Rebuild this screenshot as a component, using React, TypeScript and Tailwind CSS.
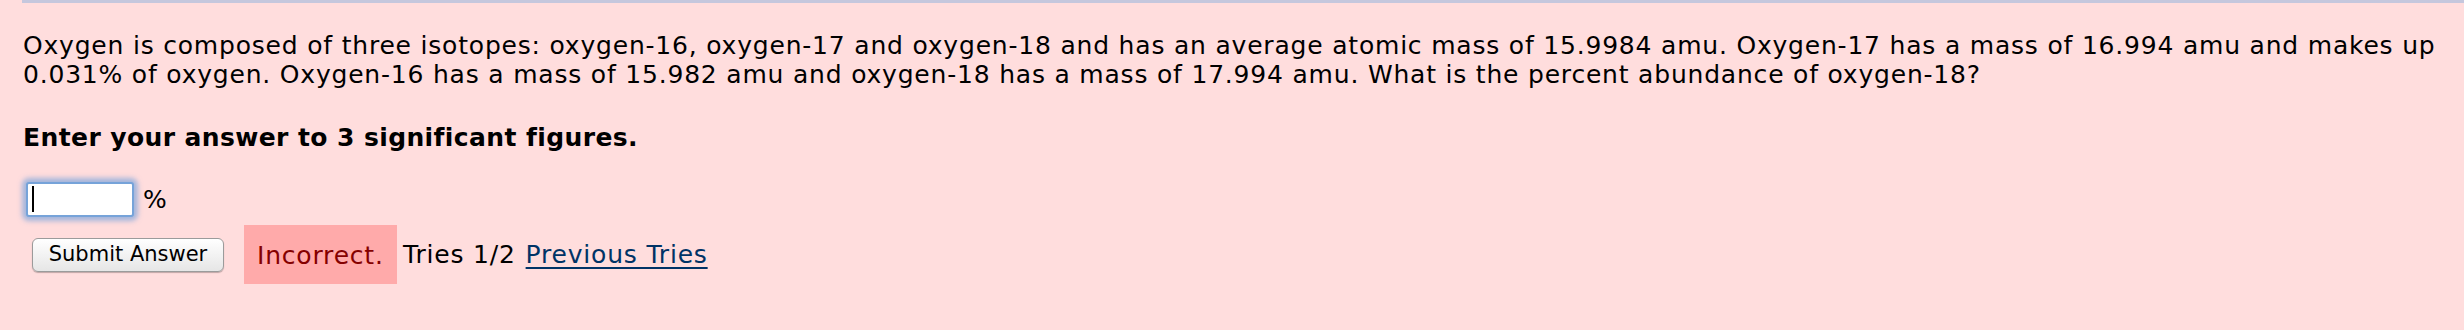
export default function App() {
  return (
    <div className="min-h-[330px] bg-[#ffdddd] font-['DejaVu_Sans',Verdana,sans-serif] text-[25px] leading-[29px] tracking-[0.8px] text-black">
      <div className="ml-[22px] h-[3px] bg-[#c5c7dd]" />
      <div className="pl-[23px] pt-[28px]">
        <p>
          Oxygen is composed of three isotopes: oxygen-16, oxygen-17 and oxygen-18 and has an average atomic mass of
          15.9984 amu. Oxygen-17 has a mass of 16.994 amu and makes up 0.031% of oxygen. Oxygen-16 has a mass of 15.982
          amu and oxygen-18 has a mass of 17.994 amu. What is the percent abundance of oxygen-18?
        </p>
        <p className="mt-[34px] font-bold tracking-[0.4px]">Enter your answer to 3 significant figures.</p>

        <div className="mt-[30px] flex items-center">
          <div className="relative ml-[3px]">
            <input
              type="text"
              className="block h-[35px] w-[108px] rounded-[3px] border-2 border-[#76a3d9] bg-white shadow-[0_0_5px_4px_rgba(125,165,220,0.7)] outline-none"
            />
            <span className="absolute left-[6px] top-[4px] h-[26px] w-[2px] bg-black" />
          </div>
          <span className="ml-[9px]">%</span>
        </div>

        <div className="mt-[8px] flex items-center">
          <button
            type="button"
            className="ml-[9px] mr-[20px] h-[34px] w-[192px] rounded-[6px] border border-[#9b9b9b] bg-gradient-to-b from-white to-[#e6e6e6] text-[21px] leading-none tracking-normal text-black shadow-[0_1px_1px_rgba(0,0,0,0.25)]"
          >
            Submit Answer
          </button>
          <div className="w-[153px] bg-[#ffaaaa] pb-[14px] pl-[13px] pt-[16px] text-[#850000]">Incorrect.</div>
          <span className="ml-[6px]">Tries 1/2</span>
          <a href="#" className="ml-[10px] text-[#003366] underline underline-offset-[4px]">
            Previous Tries
          </a>
        </div>
      </div>
    </div>
  );
}
